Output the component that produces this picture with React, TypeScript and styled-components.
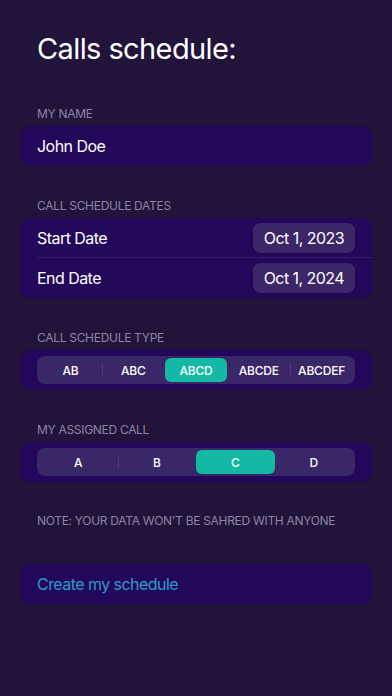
import React, { useState } from "react";
import styled, { createGlobalStyle } from "styled-components";

const Global = createGlobalStyle`
  html, body { margin: 0; padding: 0; background: #22133b; }
  body { font-family: Inter, "Liberation Sans", Arial, sans-serif; -webkit-font-smoothing: antialiased; }
  * { box-sizing: border-box; }
`;

const Page = styled.div`
  width: 392px;
  min-height: 696px;
  background: #22133b;
  padding: 0 20px;
  display: flex;
  flex-direction: column;
  color: #fff;
`;

const Title = styled.h1`
  margin: 31px 0 0 17px;
  font-size: 29px;
  font-weight: 400;
  line-height: 36px;
  color: #fff;
  letter-spacing: -0.6px;
`;

const Label = styled.div<{ $top: number }>`
  margin: ${(p) => p.$top}px 0 4px 17px;
  font-size: 12px;
  line-height: 16px;
  color: #8d84a6;
  text-transform: uppercase;
  letter-spacing: -0.3px;
`;

const Card = styled.div`
  background: #23075a;
  border-radius: 10px;
  display: flex;
  flex-direction: column;
`;

const Row = styled.div<{ $divider?: boolean }>`
  height: 40px;
  display: flex;
  align-items: center;
  justify-content: space-between;
  padding: 0 17px;
  position: relative;
  ${(p) =>
    p.$divider
      ? `&::after { content: ""; position: absolute; left: 17px; right: 0; bottom: 0; height: 1px; background: #341c66; }`
      : ""}
`;

const RowText = styled.span<{ $color?: string }>`
  font-size: 16px;
  letter-spacing: -0.55px;
  color: ${(p) => p.$color || "#fff"};
`;

const Pill = styled.span`
  height: 30px;
  padding: 0 11px;
  border-radius: 8px;
  background: #3b2668;
  display: flex;
  align-items: center;
  font-size: 16px;
  letter-spacing: -0.55px;
  color: #fff;
`;

const SegWrap = styled.div`
  height: 40px;
  padding: 6px 17px;
  display: flex;
`;

const Segmented = styled.div<{ $count: number }>`
  flex: 1;
  height: 28px;
  border-radius: 8px;
  background: #3a2768;
  display: grid;
  grid-template-columns: repeat(${(p) => p.$count}, 1fr);
  padding: 2px;
`;

const Segment = styled.button<{ $active: boolean; $sep: boolean }>`
  all: unset;
  position: relative;
  display: flex;
  align-items: center;
  justify-content: center;
  border-radius: 6px;
  font-family: Inter, "Liberation Sans", Arial, sans-serif;
  font-size: 12px;
  font-weight: 500;
  letter-spacing: -0.2px;
  color: #fff;
  background: ${(p) => (p.$active ? "#14b9a5" : "transparent")};
  cursor: pointer;
  ${(p) =>
    p.$sep
      ? `&::before { content: ""; position: absolute; left: 0; top: 5px; bottom: 5px; width: 1px; background: #4e3a7e; }`
      : ""}
`;

const Note = styled.div`
  margin: 31px 0 0 17px;
  font-size: 12px;
  line-height: 16px;
  color: #8d84a6;
  letter-spacing: -0.3px;
`;

const ActionCard = styled(Card)`
  margin-top: 35px;
`;

function Seg({ items, active, onPick }: { items: string[]; active: number; onPick: (i: number) => void }) {
  return (
    <SegWrap>
      <Segmented $count={items.length}>
        {items.map((it, i) => (
          <Segment
            key={it}
            $active={i === active}
            $sep={i > 0 && i !== active && i - 1 !== active}
            onClick={() => onPick(i)}
          >
            {it}
          </Segment>
        ))}
      </Segmented>
    </SegWrap>
  );
}

export default function App() {
  const [type, setType] = useState(2);
  const [call, setCall] = useState(2);
  return (
    <>
      <Global />
      <Page>
        <Title>Calls schedule:</Title>
        <Label $top={39}>My name</Label>
        <Card>
          <Row>
            <RowText>John Doe</RowText>
          </Row>
        </Card>
        <Label $top={32}>Call schedule dates</Label>
        <Card>
          <Row $divider>
            <RowText>Start Date</RowText>
            <Pill>Oct 1, 2023</Pill>
          </Row>
          <Row>
            <RowText>End Date</RowText>
            <Pill>Oct 1, 2024</Pill>
          </Row>
        </Card>
        <Label $top={32}>Call schedule type</Label>
        <Card>
          <Seg items={["AB", "ABC", "ABCD", "ABCDE", "ABCDEF"]} active={type} onPick={setType} />
        </Card>
        <Label $top={32}>My assigned call</Label>
        <Card>
          <Seg items={["A", "B", "C", "D"]} active={call} onPick={setCall} />
        </Card>
        <Note>NOTE: YOUR DATA WON'T BE SAHRED WITH ANYONE</Note>
        <ActionCard>
          <Row>
            <RowText $color="#2a9dcb">Create my schedule</RowText>
          </Row>
        </ActionCard>
      </Page>
    </>
  );
}
